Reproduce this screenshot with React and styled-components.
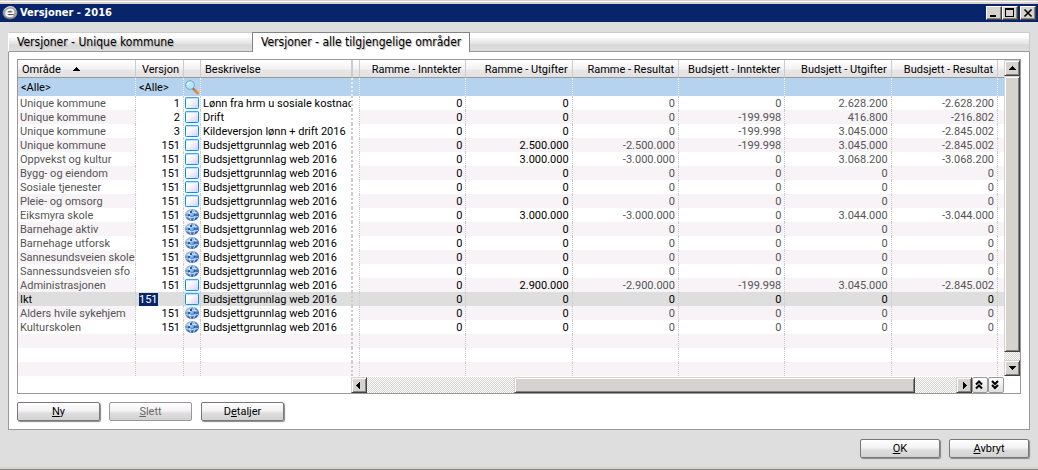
import React from 'react';
import styled, { createGlobalStyle, css } from 'styled-components';

const GlobalStyle = createGlobalStyle`
  * { box-sizing: border-box; }
  body {
    margin: 0;
    background: #dedede;
    font-family: Roboto, "DejaVu Sans Condensed", sans-serif;
    font-size: 11px;
    line-height: 14px;
    color: #000;
  }
  button, input { font: inherit; color: inherit; margin: 0; }
`;

const Window = styled.div`
  min-height: 100vh;
  display: flex;
  flex-direction: column;
  background: #dedede;
  border-top: 1px solid #d6d3ce;
  border-bottom: 1px solid #848284;
  box-shadow: inset 0 1px #fff, inset 0 3px #d6d3ce, inset 0 -2px #d6d3ce;
  padding-top: 3px;
`;

const TitleBar = styled.header`
  display: flex;
  align-items: center;
  height: 18px;
  padding: 0 2px;
  background: #08246b;
  color: #fff;
`;

const Title = styled.h1`
  flex: 1;
  margin: 0 0 0 2px;
  font-family: "DejaVu Sans Condensed", "DejaVu Sans", sans-serif;
  font-size: 11px;
  line-height: 18px;
  font-weight: bold;
`;

const raised = css`
  background: #d6d3ce;
  border: 1px solid;
  border-color: #d6d3ce #424142 #424142 #d6d3ce;
  box-shadow: inset 1px 1px #fff, inset -1px -1px #848284;
`;

const CaptionButton = styled.button`
  ${raised}
  border-color: #fff #424142 #424142 #fff;
  box-shadow: inset -1px -1px #848284;
  width: 16px;
  height: 14px;
  padding: 0;
  margin-left: ${(p) => (p.$apart ? 2 : 0)}px;
  svg { display: block; }
`;

const Main = styled.main`
  display: flex;
  flex-direction: column;
  padding: 10px 8px 0;
`;

const Tabs = styled.div`
  display: flex;
  height: 20px;
  border: 1px solid #ccc;
  border-bottom: 1px solid #999;
  border-left-color: #fff;
  background: linear-gradient(#fff 0 20%, #f0eeee 40%, #e4e4e4 60%, #d8d8d8 65%, #dedede);
`;

const Tab = styled.button`
  width: ${(p) => (p.$active ? 218 : 243)}px;
  height: ${(p) => (p.$active ? 20 : 18)}px;
  margin-top: ${(p) => (p.$active ? -1 : 0)}px;
  padding: ${(p) => (p.$active ? '0 8px 2px' : '0 8px')};
  border: 0 solid #848284;
  border-width: ${(p) => (p.$active ? '1px 1px 0' : '0')};
  background: ${(p) => (p.$active ? '#fff' : 'transparent')};
  text-align: left;
  font-family: "DejaVu Sans Condensed", "DejaVu Sans", sans-serif;
  font-size: 12px;
  line-height: 16px;
  white-space: nowrap;
  text-shadow: 1px 1px 1px #aaa;
`;

const Panel = styled.section`
  padding: 7px 8px 8px;
  background: #fff;
  border: 1px solid #999;
  border-top: 0;
`;

const GridFrame = styled.div`
  border: 1px solid #999;
`;

const GridBody = styled.div`
  display: flex;
`;

const Table = styled.table`
  flex: 1;
  width: 0;
  min-width: 0;
  table-layout: fixed;
  border-collapse: separate;
  border-spacing: 0;
`;

const Col = styled.col`
  width: ${(p) => (p.$w ? `${p.$w}px` : 'auto')};
`;

const HeadCell = styled.th`
  height: 18px;
  padding: 3px 4px 0;
  font-weight: normal;
  text-align: ${(p) => (p.$right ? 'right' : 'left')};
  white-space: nowrap;
  background: linear-gradient(#fff, #f4f2f2 50%, #e8e6e6 60%, #e2e2e2);
  border-right: ${(p) => (p.$split ? 2 : 1)}px solid #ccc;
  border-bottom: 1px solid #999;
  &:last-child { border-right: 0; }
  svg { margin-left: 12px; vertical-align: 2px; }
`;

const cellLines = css`
  padding: 2px 3px 0 2px;
  overflow: hidden;
  white-space: nowrap;
  border-right: ${(p) => (p.$split ? '2px' : '1px')} dotted #ccc;
  &:last-child { border-right: 0; }
`;

const FilterCell = styled.td`
  ${cellLines}
  height: 18px;
  padding-left: 3px;
  background: #b5d3ef;
  border-right-color: #eee;
  svg { display: block; }
  ${(p) => p.$icon && 'padding: 0 1px;'}
`;

const FilterInput = styled.input`
  display: block;
  width: 100%;
  padding: 0;
  border: 0;
  background: none;
  outline: 0;
`;

const Cell = styled.td`
  ${cellLines}
  height: 14px;
  line-height: 12px;
  text-align: ${(p) => (p.$right ? 'right' : 'left')};
  color: ${(p) => (p.$muted ? '#555' : '#000')};
  ${(p) => p.$plain && 'background: #fff;'}
  ${(p) => p.$icon && 'padding: 0 1px;'}
  ${(p) => p.$editing && 'padding: 0 3px;'}
  svg { display: block; }
`;

const Row = styled.tr`
  background: #fff;
  &:nth-child(even) { background: #f7f3f7; }
  ${(p) => p.$selected && css`
    &&, && ${Cell} { background: #dedede; color: #000; }
  `}
`;

const VersionInput = styled.input`
  display: block;
  width: 19px;
  height: 13px;
  padding: 0;
  border: 0;
  outline: 0;
  background: #08246b;
  color: #fff;
`;

const track = css`
  background: repeating-conic-gradient(#d6d3ce 0 25%, #fff 0 50%) 0 0 / 2px 2px;
`;

const VScroll = styled.div`
  ${track}
  width: 16px;
  display: flex;
  flex-direction: column;
`;

const VThumb = styled.div`
  ${raised}
  flex: 1;
  margin-bottom: 8px;
`;

const HRow = styled.div`
  display: flex;
  height: 17px;
  padding: 1px 16px 0 333px;
`;

const HTrack = styled.div`
  ${track}
  flex: 1;
  display: flex;
  padding-right: 41px;
  padding-left: 147px;
`;

const HThumb = styled.div`
  ${raised}
  flex: 1;
`;

const ScrollButton = styled.button`
  ${raised}
  flex: none;
  width: 16px;
  height: 16px;
  padding: 0;
  svg { display: block; }
`;

const JumpButton = styled(ScrollButton)`
  background: linear-gradient(#fff, #dedede);
  border-color: #999;
  border-radius: 2px;
  box-shadow: none;
`;

const PushButton = styled.button`
  width: ${(p) => (p.$dialog ? 80 : 83)}px;
  height: 19px;
  padding: 1px 0 0;
  line-height: 16px;
  border: 1px solid #777;
  border-radius: 2px;
  background: linear-gradient(#fff, #f4f2f4 45%, #dedede 60%, #d2d2d2);
  box-shadow: 1px 1px 1px #888;
  &:disabled { color: #666; border-color: #999; box-shadow: none; }
`;

const Actions = styled.div`
  display: flex;
  gap: 9px;
  padding-top: 8px;
`;

const DialogActions = styled.footer`
  display: flex;
  justify-content: flex-end;
  gap: 9px;
  padding: 9px 1px 11px;
`;

const Logo = () => (
  <svg width="16" height="16" viewBox="0 0 16 16" aria-hidden="true">
    <ellipse cx="8" cy="8" rx="7.5" ry="6.500" fill="#6c6c6c" />
    <ellipse cx="8" cy="7.500" rx="7" ry="6" fill="#a4a4a4" />
    <path d="M2.500 5q2-3.500 6-3.500t5 3" fill="none" stroke="#e4e4e4" />
    <path d="M4.800 8.300h6.400c.8-2.300-.6-3.700-2.800-3.700-2.300 0-4.300 1.600-4.300 3.700 0 2 1.500 2.900 3.600 2.900 1.300 0 2.200-.2 3.300-.7" fill="none" stroke="#fff" strokeWidth="1.600" />
    <path d="M6.500 6.800h3M6.500 9.500h5" stroke="#444" strokeWidth="0.900" />
  </svg>
);

const SheetIcon = () => (
  <svg width="14" height="14" viewBox="0 0 14 14" aria-label="Versjon">
    <defs>
      <linearGradient id="sheet" x1="0" y1="0" x2="1" y2="1">
        <stop offset="0.3" stopColor="#fff" />
        <stop offset="1" stopColor="#ceceff" />
      </linearGradient>
    </defs>
    <rect x="0.5" y="1.500" width="13" height="11" rx="1" fill="url(#sheet)" stroke="#0092f7" />
    <path d="M1 1.500h12" stroke="#3aa6f7" strokeWidth="1" />
    <path d="M1 2.500h12" stroke="#bfe0fb" strokeWidth="1" />
  </svg>
);

const GlobeIcon = () => (
  <svg width="14" height="14" viewBox="0 0 14 14" aria-label="Web">
    <defs>
      <radialGradient id="globe" cx="0.35" cy="0.3" r="0.8">
        <stop offset="0" stopColor="#c4dcf4" />
        <stop offset="0.5" stopColor="#5a90d0" />
        <stop offset="1" stopColor="#18489c" />
      </radialGradient>
    </defs>
    <ellipse cx="7" cy="7" rx="7" ry="6" fill="url(#globe)" />
    <path d="M1.500 5q5-2 11 0M.5 8.500q6 2.500 12.500 0M6 1.500q-3.500 5 0 11M8.500 1.500q3.500 5 0 11" fill="none" stroke="#e4f0fc" strokeWidth="0.800" />
    <path d="M5 3l2-.5V5H5zM9 5.500l2 .5-.5 2H9zM3 6h2v2H3z" fill="#2458a8" />
  </svg>
);

const SearchIcon = () => (
  <svg width="15" height="16" viewBox="0 0 15 16" aria-label="Søk">
    <path d="M8.500 10l4 4" stroke="#e88a3c" strokeWidth="3" strokeLinecap="round" />
    <path d="M7.500 9l2 2" stroke="#737984" strokeWidth="1.500" />
    <circle cx="5" cy="6" r="4.300" fill="#b4e8fc" stroke="#6ca4cc" />
    <path d="M2.500 6q.3-2.500 3-2.700" stroke="#fff" strokeWidth="1.300" fill="none" />
  </svg>
);

const arrows = {
  up: 'M7 5h1v1h1v1h1v1h1v1H4V8h1V7h1V6h1z',
  down: 'M4 5h7v1h-1v1H9v1H8v1H7V8H6V7H5V6H4z',
  left: 'M4 7h1V6h1V5h1V4h1v7H7v-1H6V9H5V8H4z',
  right: 'M6 4h1v1h1v1h1v1h1v1H9v1H8v1H7v1H6z',
};

const Arrow = ({ dir }) => (
  <svg width="14" height="14" viewBox="0 0 14 14" aria-hidden="true">
    <path d={arrows[dir]} fill="#000" shapeRendering="crispEdges" />
  </svg>
);

const DoubleArrow = ({ down }) => (
  <svg width="14" height="14" viewBox="0 0 14 14" aria-hidden="true">
    <path
      d={down ? 'M3 3l3 3 3-3M3 7l3 3 3-3' : 'M3 6.500l3-3 3 3M3 10.500l3-3 3 3'}
      fill="none"
      stroke="#000"
      strokeWidth="2"
    />
  </svg>
);

const WEB = 'Budsjettgrunnlag web 2016';
const zeros = ['0', '0', '0', '0', '0', '0'];
const rows = [
  ['Unique kommune', '1', 's', 'Lønn fra hrm u sosiale kostnac', ['0', '0', '0', '0', '2.628.200', '-2.628.200']],
  ['Unique kommune', '2', 's', 'Drift', ['0', '0', '0', '-199.998', '416.800', '-216.802']],
  ['Unique kommune', '3', 's', 'Kildeversjon lønn + drift 2016', ['0', '0', '0', '-199.998', '3.045.000', '-2.845.002']],
  ['Unique kommune', '151', 's', WEB, ['0', '2.500.000', '-2.500.000', '-199.998', '3.045.000', '-2.845.002']],
  ['Oppvekst og kultur', '151', 's', WEB, ['0', '3.000.000', '-3.000.000', '0', '3.068.200', '-3.068.200']],
  ['Bygg- og eiendom', '151', 's', WEB, zeros],
  ['Sosiale tjenester', '151', 's', WEB, zeros],
  ['Pleie- og omsorg', '151', 's', WEB, zeros],
  ['Eiksmyra skole', '151', 'g', WEB, ['0', '3.000.000', '-3.000.000', '0', '3.044.000', '-3.044.000']],
  ['Barnehage aktiv', '151', 'g', WEB, zeros],
  ['Barnehage utforsk', '151', 'g', WEB, zeros],
  ['Sannesundsveien skole', '151', 'g', WEB, zeros],
  ['Sannessundsveien sfo', '151', 'g', WEB, zeros],
  ['Administrasjonen', '151', 's', WEB, ['0', '2.900.000', '-2.900.000', '-199.998', '3.045.000', '-2.845.002']],
  ['Ikt', '151', 's', WEB, zeros],
  ['Alders hvile sykehjem', '151', 'g', WEB, zeros],
  ['Kulturskolen', '151', 'g', WEB, zeros],
];
const SELECTED = 14;
const numberHeads = ['Ramme - Inntekter', 'Ramme - Utgifter', 'Ramme - Resultat', 'Budsjett - Inntekter', 'Budsjett - Utgifter', 'Budsjett - Resultat'];

export default function App() {
  return (
    <Window>
      <GlobalStyle />
      <TitleBar>
        <Logo />
        <Title>Versjoner - 2016</Title>
        <CaptionButton aria-label="Minimer">
          <svg width="14" height="12"><path d="M3 8h6v2H3z" /></svg>
        </CaptionButton>
        <CaptionButton aria-label="Maksimer">
          <svg width="14" height="12"><path d="M2 1h9v9H2zM3 3v6h7V3z" fillRule="evenodd" /></svg>
        </CaptionButton>
        <CaptionButton $apart aria-label="Lukk">
          <svg width="14" height="12"><path d="M3.500 2.500l7 7M10.500 2.500l-7 7" stroke="#000" strokeWidth="1.600" /></svg>
        </CaptionButton>
      </TitleBar>
      <Main>
        <Tabs role="tablist">
          <Tab role="tab" aria-selected="false">Versjoner - Unique kommune</Tab>
          <Tab role="tab" aria-selected="true" $active>Versjoner - alle tilgjengelige områder</Tab>
        </Tabs>
        <Panel>
          <GridFrame>
            <GridBody>
              <Table>
                <colgroup>
                  <Col $w={118} />
                  <Col $w={48} />
                  <Col $w={17} />
                  <Col $w={152} />
                  <Col $w={7} />
                  {numberHeads.map((h) => <Col key={h} />)}
                  <Col $w={6} />
                </colgroup>
                <thead>
                  <tr>
                    <HeadCell>
                      Område
                      <svg width="7" height="4"><path d="M3 0h1v1h1v1h1v1h1v1H0V3h1V2h1V1h1z" shapeRendering="crispEdges" /></svg>
                    </HeadCell>
                    <HeadCell $right>Versjon</HeadCell>
                    <HeadCell />
                    <HeadCell $split>Beskrivelse</HeadCell>
                    <HeadCell />
                    {numberHeads.map((h) => <HeadCell $right key={h}>{h}</HeadCell>)}
                    <HeadCell />
                  </tr>
                </thead>
                <tbody>
                  <tr>
                    <FilterCell><FilterInput aria-label="Filter område" defaultValue="<Alle>" /></FilterCell>
                    <FilterCell><FilterInput aria-label="Filter versjon" defaultValue="<Alle>" /></FilterCell>
                    <FilterCell $icon><SearchIcon /></FilterCell>
                    <FilterCell $split />
                    <FilterCell />
                    {numberHeads.map((h) => <FilterCell key={h} />)}
                    <FilterCell />
                  </tr>
                </tbody>
                <tbody>
                  {rows.map(([area, version, icon, text, values], i) => (
                    <Row key={i} $selected={i === SELECTED}>
                      <Cell $muted>{area}</Cell>
                      <Cell $right $plain $editing={i === SELECTED}>
                        {i === SELECTED ? <VersionInput aria-label="Versjon" defaultValue={version} /> : version}
                      </Cell>
                      <Cell $icon>{icon === 's' ? <SheetIcon /> : <GlobeIcon />}</Cell>
                      <Cell $plain $split>{text}</Cell>
                      <Cell $plain />
                      {values.map((v, n) => <Cell key={n} $right $muted={n > 1}>{v}</Cell>)}
                      <Cell />
                    </Row>
                  ))}
                  {[17, 18, 19].map((i) => (
                    <Row key={i}>
                      {Array.from({ length: 12 }, (_, n) => <Cell key={n} $split={n === 3} />)}
                    </Row>
                  ))}
                </tbody>
              </Table>
              <VScroll>
                <ScrollButton aria-label="Rull opp"><Arrow dir="up" /></ScrollButton>
                <VThumb />
                <ScrollButton aria-label="Rull ned"><Arrow dir="down" /></ScrollButton>
              </VScroll>
            </GridBody>
            <HRow>
              <ScrollButton aria-label="Rull til venstre"><Arrow dir="left" /></ScrollButton>
              <HTrack><HThumb /></HTrack>
              <ScrollButton aria-label="Rull til høyre"><Arrow dir="right" /></ScrollButton>
              <JumpButton aria-label="Til toppen"><DoubleArrow /></JumpButton>
              <JumpButton aria-label="Til bunnen"><DoubleArrow down /></JumpButton>
            </HRow>
          </GridFrame>
          <Actions>
            <PushButton><u>N</u>y</PushButton>
            <PushButton disabled><u>S</u>lett</PushButton>
            <PushButton>D<u>e</u>taljer</PushButton>
          </Actions>
        </Panel>
        <DialogActions>
          <PushButton $dialog><u>O</u>K</PushButton>
          <PushButton $dialog><u>A</u>vbryt</PushButton>
        </DialogActions>
      </Main>
    </Window>
  );
}
